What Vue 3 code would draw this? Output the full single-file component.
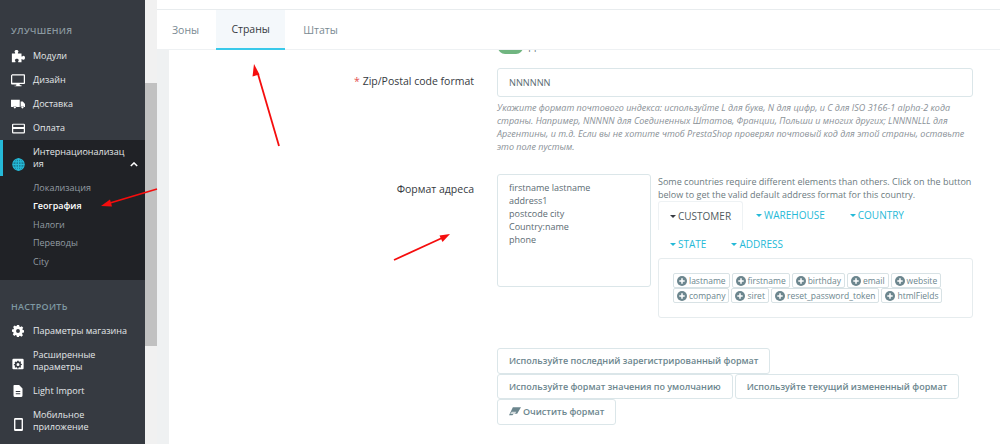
<script setup>
const topItems = [
  { label: 'Модули', icon: 'puzzle' },
  { label: 'Дизайн', icon: 'monitor' },
  { label: 'Доставка', icon: 'truck' },
  { label: 'Оплата', icon: 'card' }
]
const subItems = [
  { label: 'Локализация' },
  { label: 'География', current: true },
  { label: 'Налоги' },
  { label: 'Переводы' },
  { label: 'City' }
]
const tokenRows = [
  ['lastname', 'firstname', 'birthday', 'email', 'website'],
  ['company', 'siret', 'reset_password_token', 'htmlFields']
]
</script>

<template>
  <div class="page">
    <aside class="sidebar">
      <div class="heading first">УЛУЧШЕНИЯ</div>
      <div v-for="item in topItems" :key="item.label" class="item">
        <span class="ico">
          <svg v-if="item.icon === 'puzzle'" viewBox="0 0 16 16" width="14" height="14"><path fill="#fff" d="M1 5h3.400c.5 0 .6-.4.3-.8C4.200 3.600 4 3.200 4 2.700 4 1.700 5 1 6.300 1s2.300.7 2.300 1.700c0 .5-.2.900-.7 1.500-.3.400-.2.800.3.800H12v3.200c0 .5.400.6.800.3.600-.5 1-.7 1.500-.7 1 0 1.700 1 1.700 2.200s-.7 2.300-1.700 2.300c-.5 0-.9-.2-1.500-.7-.4-.3-.8-.2-.8.300V15H8.500c-.5 0-.6-.4-.3-.8.500-.6.700-1 .7-1.500 0-1-1-1.700-2.200-1.700s-2.300.7-2.300 1.700c0 .5.200.9.700 1.500.3.400.2.800-.3.800H1z"/></svg>
          <svg v-else-if="item.icon === 'monitor'" viewBox="0 0 16 16" width="14" height="14"><path fill="#fff" fill-rule="evenodd" d="M1 1.500h14a1 1 0 0 1 1 1v9a1 1 0 0 1-1 1H9.800l.4 1.500H12V15H4v-.5h1.800l.4-1.500H1a1 1 0 0 1-1-1v-9a1 1 0 0 1 1-1zm.4 1.400v8.200h13.200V2.900z"/></svg>
          <svg v-else-if="item.icon === 'truck'" viewBox="0 0 16 16" width="14" height="14"><path fill="#fff" d="M0 3h10v8.500H6.200a1.900 1.900 0 0 0-3.600 0H1a1 1 0 0 1-1-1zm11 2.200h2.500L16 8v3.500h-1.100a1.900 1.900 0 0 0-3.600 0H11zM4.400 10.500a1.300 1.300 0 1 1 0 2.600 1.300 1.300 0 0 1 0-2.600zm8.700 0a1.300 1.300 0 1 1 0 2.600 1.300 1.300 0 0 1 0-2.600z"/></svg>
          <svg v-else viewBox="0 0 16 16" width="13" height="13"><path fill="#fff" fill-rule="evenodd" d="M1.500 2h13A1.500 1.500 0 0 1 16 3.500v9a1.500 1.500 0 0 1-1.500 1.500h-13A1.500 1.500 0 0 1 0 12.500v-9A1.500 1.500 0 0 1 1.500 2zm0 1.500V6h13V3.500zm0 5v4h13v-4z"/></svg>
        </span>
        <span class="label">{{ item.label }}</span>
      </div>

      <div class="group">
        <div class="group-head">
          <span class="ico">
            <svg viewBox="0 0 16 16" width="13" height="13" fill="none" stroke="#25b9d7" stroke-width="1.300"><circle cx="8" cy="8" r="7" fill="#1a7f96"/><ellipse cx="8" cy="8" rx="3.200" ry="7"/><path d="M8 1v14M1 8h14M2 4.500h12M2 11.500h12"/></svg>
          </span>
          <span class="label wrap">Интернационализац ия</span>
          <svg class="chev" viewBox="0 0 10 6" width="8" height="5" fill="none" stroke="#fff" stroke-width="1.800"><path d="M1 5l4-4 4 4"/></svg>
        </div>
        <ul class="subs">
          <li v-for="s in subItems" :key="s.label" :class="{ current: s.current }">{{ s.label }}</li>
        </ul>
      </div>

      <div class="heading second">НАСТРОИТЬ</div>
      <div class="item">
        <span class="ico">
          <svg viewBox="0 0 16 16" width="12" height="12"><path fill="#fff" fill-rule="evenodd" d="M6.500 0h3l.4 2.100 1.300.6L13 1.500 15 3.600l-1.200 1.800.6 1.300 1.600.3v3l-2.100.4-.5 1.300 1.200 1.800-2.100 2-1.800-1.200-1.300.5L9.500 16h-3l-.4-2.100-1.300-.6L3 14.500 1 12.400l1.200-1.800-.6-1.300L0 9V6l2.100-.4.500-1.300L1.400 2.500l2.100-2 1.800 1.200 1-.5zM8 5.400a2.600 2.600 0 1 0 0 5.200 2.600 2.600 0 0 0 0-5.200z"/></svg>
        </span>
        <span class="label">Параметры магазина</span>
      </div>
      <div class="item tall">
        <span class="ico low">
          <svg viewBox="0 0 16 16" width="12" height="12"><path fill="#fff" fill-rule="evenodd" d="M2 1h12a1.500 1.500 0 0 1 1.500 1.500v11A1.500 1.500 0 0 1 14 15H2a1.500 1.500 0 0 1-1.500-1.500v-11A1.500 1.500 0 0 1 2 1zm5 2.500l-.3 1.300-1.100.5-1.200-.7-1 1 .7 1.200-.5 1.100L2.500 8.200v1.300l1.100.3.500 1.100-.6 1.100 1 1 1.100-.6 1.100.4.300 1.200h1.600l.3-1.200 1.100-.5 1.100.6 1-1-.6-1.100.5-1.100 1.100-.3V8l-1.100-.3-.5-1.200.6-1.100-1-1-1.100.6-1.100-.4L9 3.500zM8 6.600a2 2 0 1 1 0 4 2 2 0 0 1 0-4z"/></svg>
        </span>
        <span class="label wrap">Расширенные параметры</span>
      </div>
      <div class="item">
        <span class="ico">
          <svg viewBox="0 0 16 16" width="12" height="12"><path fill="#fff" fill-rule="evenodd" d="M3 0h6.500L14 4.500V14a2 2 0 0 1-2 2H4a2 2 0 0 1-2-2V1a1 1 0 0 1 1-1zm2 8v1.300h6V8zm0 3v1.300h6V11z"/></svg>
        </span>
        <span class="label">Light Import</span>
      </div>
      <div class="item tall">
        <span class="ico low">
          <svg viewBox="0 0 16 16" width="13" height="13"><path fill="#fff" fill-rule="evenodd" d="M4 0h8a1.500 1.500 0 0 1 1.500 1.500v13A1.500 1.500 0 0 1 12 16H4a1.500 1.500 0 0 1-1.500-1.500v-13A1.500 1.500 0 0 1 4 0zm.2 2v11.500h7.600V2z"/></svg>
        </span>
        <span class="label wrap">Мобильное приложение</span>
      </div>
    </aside>

    <div class="scrollbar"><div class="thumb"></div></div>

    <main class="main">
      <div class="topbar"></div>
      <nav class="tabs">
        <a class="tab">Зоны</a>
        <a class="tab active">Страны</a>
        <a class="tab">Штаты</a>
      </nav>
      <div class="body">
        <div class="gutter"></div>
        <section class="panel">
          <div class="toggle-row"><div class="toggle"></div><span class="toggle-text">Да</span></div>

          <div class="row zip">
            <label class="lbl"><span class="req">*</span> Zip/Postal code format</label>
            <div class="field">
              <div class="input">NNNNNN</div>
              <p class="help">Укажите формат почтового индекса: используйте L для букв, N для цифр, и C для ISO 3166-1 alpha-2 кода страны. Например, NNNNN для Соединенных Штатов, Франции, Польши и многих других; LNNNNLLL для Аргентины, и т.д. Если вы не хотите чтоб PrestaShop проверял почтовый код для этой страны, оставьте это поле пустым.</p>
            </div>
          </div>

          <div class="row addr">
            <label class="lbl addr-lbl">Формат адреса</label>
            <div class="field addr-field">
              <div class="textarea">firstname lastname<br>address1<br>postcode city<br>Country:name<br>phone</div>
              <div class="side">
                <p class="note">Some countries require different elements than others. Click on the button below to get the valid default address format for this country.</p>
                <div class="ftabs">
                  <span class="ftab on"><i class="caret dark"></i>CUSTOMER</span>
                  <span class="ftab"><i class="caret"></i>WAREHOUSE</span>
                  <span class="ftab"><i class="caret"></i>COUNTRY</span>
                  <span class="ftab"><i class="caret"></i>STATE</span>
                  <span class="ftab"><i class="caret"></i>ADDRESS</span>
                </div>
                <div class="tokens">
                  <div v-for="(row, i) in tokenRows" :key="i" class="token-row">
                    <span v-for="t in row" :key="t" class="token">
                      <svg viewBox="0 0 10 10" width="10" height="10"><circle cx="5" cy="5" r="5" fill="#6c868e"/><path d="M5 2.300v5.400M2.300 5h5.400" stroke="#fff" stroke-width="1.500"/></svg>{{ t }}
                    </span>
                  </div>
                </div>
              </div>
            </div>
          </div>

          <div class="buttons">
            <div class="btn-line"><button class="btn">Используйте последний зарегистрированный формат</button></div>
            <div class="btn-line gap">
              <button class="btn">Используйте формат значения по умолчанию</button>
              <button class="btn">Используйте текущий измененный формат</button>
            </div>
            <div class="btn-line">
              <button class="btn with-icon">
                <svg viewBox="0 0 14 10" width="12" height="9"><path fill="#6c868e" d="M4.500 0H14L9.500 7.500H5.500L4 9.500H0z"/><path fill="#fff" d="M3.200 5.200h5.400L6.800 8H1.400z" opacity=".7"/></svg>
                Очистить формат
              </button>
            </div>
          </div>
        </section>
      </div>
    </main>

    <svg class="arrows" width="1000" height="444" viewBox="0 0 1000 444">
      <g fill="#f50d0d">
        <path d="M279 146L258 74" stroke="#f50d0d" stroke-width="1.800" />
        <path d="M254 64l5.500 10.500-7 2z" />
        <path d="M157 189L110 203" stroke="#f50d0d" stroke-width="1.800" />
        <path d="M101 206l9-6.500 2 7z" />
        <path d="M394 260L442 238" stroke="#f50d0d" stroke-width="1.800" />
        <path d="M450 234l-7.500 8-3-6.500z" />
      </g>
    </svg>
  </div>
</template>

<style>
html, body { margin: 0; background: #fff; overflow: hidden; }
</style>

<style scoped>
.page {
  position: relative;
  display: flex;
  width: 1000px;
  height: 444px;
  overflow: hidden;
  font-family: "Open Sans", "Noto Sans", sans-serif;
  color: #363a41;
}
.sidebar {
  width: 145px;
  flex: none;
  background: #363a41;
  box-sizing: border-box;
  color: #fff;
  font-size: 9px;
}
.heading {
  padding-left: 11px;
  font-size: 9px;
  font-weight: 600;
  letter-spacing: .3px;
  line-height: 14px;
  color: #8b99a0;
}
.heading.first { padding-top: 24px; padding-bottom: 6px; }
.heading.second { padding-top: 20px; padding-bottom: 5px; color: #7f99a3; }
.item {
  display: flex;
  align-items: center;
  height: 24px;
}
.item.tall { height: 36px; align-items: flex-start; }
.item.tall .label { line-height: 12px; margin-top: 6px; }
.ico {
  width: 33px;
  flex: none;
  display: flex;
  justify-content: center;
  padding-left: 4px;
  padding-right: 1px;
  box-sizing: border-box;
}
.ico.low { margin-top: 15px; }
.label { color: #e4e7e9; line-height: 12px; }
.label.wrap { width: 95px; }
.group {
  background: #202226;
  height: 140px;
  box-sizing: border-box;
}
.group-head {
  position: relative;
  display: flex;
  align-items: center;
  height: 36px;
  border-left: 3px solid #25b9d7;
  box-sizing: border-box;
}
.group-head .ico { width: 30px; padding-left: 1px; padding-top: 12px; }
.group-head .chev { position: absolute; left: 127px; top: 22px; }
.subs {
  margin: 3px 0 0;
  padding: 0 0 0 33px;
  list-style: none;
  font-size: 9px;
  line-height: 18.400px;
  color: #939ca3;
}
.subs li.current { color: #fff; font-weight: 600; }
.scrollbar {
  width: 12px;
  flex: none;
  background: #f1f1f1;
}
.thumb {
  height: 263px;
  margin-top: 83px;
  background: #c1c1c1;
}
.main {
  flex: 1;
  min-width: 0;
  display: flex;
  flex-direction: column;
}
.topbar {
  height: 9px;
  background: #fff;
  border-bottom: 1px solid #e8ecee;
  flex: none;
}
.tabs {
  display: flex;
  height: 40px;
  flex: none;
  background: #fff;
  box-sizing: border-box;
  border-bottom: 1px solid #eef1f3;
  position: relative;
  z-index: 2;
}
.tab {
  display: flex;
  align-items: center;
  justify-content: center;
  height: 40px;
  box-sizing: border-box;
  font-size: 10.500px;
  color: #7a8a92;
  padding: 0 17px 0 15px;
}
.tab.active {
  background: #f4f8fb;
  color: #363a41;
  border-bottom: 2px solid #39c9ea;
  padding: 0;
  width: 69px;
}
.tab.active + .tab { padding-left: 18px; }
.body { flex: 1; display: flex; min-height: 0; }
.gutter { width: 12px; flex: none; background: #eff1f2; }
.panel { flex: 1; background: #fff; min-width: 0; }
.toggle-row {
  display: flex;
  align-items: flex-start;
  gap: 6px;
  height: 18px;
  padding-left: 329px;
}
.toggle {
  width: 25px;
  height: 14px;
  flex: none;
  margin-top: -10px;
  background: #70b580;
  border-radius: 8px;
}
.toggle-text {
  font-size: 10px;
  line-height: 12px;
  margin-top: -10px;
  color: #6c7a80;
}
.row { display: flex; }
.lbl {
  width: 305px;
  flex: none;
  text-align: right;
  font-size: 10.500px;
  line-height: 16px;
  color: #363a41;
  padding-top: 5px;
}
.req { color: #e34f4f; }
.field { margin-left: 23px; width: 476px; flex: none; }
.input {
  height: 29px;
  box-sizing: border-box;
  border: 1px solid #dbe6e9;
  border-radius: 3px;
  font-size: 9.200px;
  line-height: 27px;
  padding-left: 11px;
  color: #5b6b72;
}
.help {
  margin: 4px 0 0;
  font-size: 9px;
  font-style: italic;
  line-height: 13px;
  color: #8a9197;
}
.addr { margin-top: 21px; }
.addr-lbl { padding-top: 7px; }
.addr-field { display: flex; gap: 7px; }
.textarea {
  width: 154px;
  height: 113px;
  flex: none;
  box-sizing: border-box;
  border: 1px solid #dbe6e9;
  border-radius: 3px;
  padding: 6px 11px;
  font-size: 9px;
  line-height: 13px;
  color: #5b6b72;
}
.side { width: 315px; flex: none; }
.note {
  margin: 1px 0 0;
  font-size: 9px;
  line-height: 13px;
  color: #6c7a80;
}
.ftabs {
  display: flex;
  flex-wrap: wrap;
  font-size: 10px;
  line-height: 29px;
}
.ftab {
  display: inline-flex;
  align-items: center;
  height: 29px;
  padding: 0 12px;
  color: #25b9d7;
  margin-right: 1px;
  box-sizing: border-box;
}
.ftab.on {
  color: #4f5b60;
  border: 1px solid #eef2f4;
  border-bottom: none;
  border-radius: 3px 3px 0 0;
  width: 85px;
  padding: 0 11px;
}
.caret {
  width: 0;
  height: 0;
  border-left: 3px solid transparent;
  border-right: 3px solid transparent;
  border-top: 3px solid #25b9d7;
  margin-right: 2px;
}
.caret.dark { border-top-color: #363a41; }
.tokens {
  height: 60px;
  width: 315px;
  margin-top: -1px;
  box-sizing: border-box;
  border: 1px solid #e6ecee;
  border-radius: 3px;
  padding: 14px 14px;
}
.token-row { display: flex; gap: 2px; }
.token {
  display: inline-flex;
  align-items: center;
  gap: 2px;
  height: 15px;
  box-sizing: border-box;
  padding: 0 3px;
  border: 1px solid #d8e2e5;
  border-radius: 2px;
  font-size: 8.500px;
  line-height: 12px;
  color: #6c868e;
  white-space: nowrap;
}
.buttons { margin-top: 30px; padding-left: 328px; }
.btn-line { display: flex; }
.btn-line.gap { gap: 2px; }
.btn {
  height: 25.500px;
  box-sizing: border-box;
  background: #fff;
  border: 1px solid #dbe6e9;
  border-radius: 3px;
  font-family: inherit;
  font-size: 9px;
  font-weight: 600;
  color: #6c868e;
  padding: 0 11px;
  white-space: nowrap;
}
.with-icon { display: inline-flex; align-items: center; gap: 2px; }
.arrows { position: absolute; left: 0; top: 0; pointer-events: none; z-index: 5; }
</style>
